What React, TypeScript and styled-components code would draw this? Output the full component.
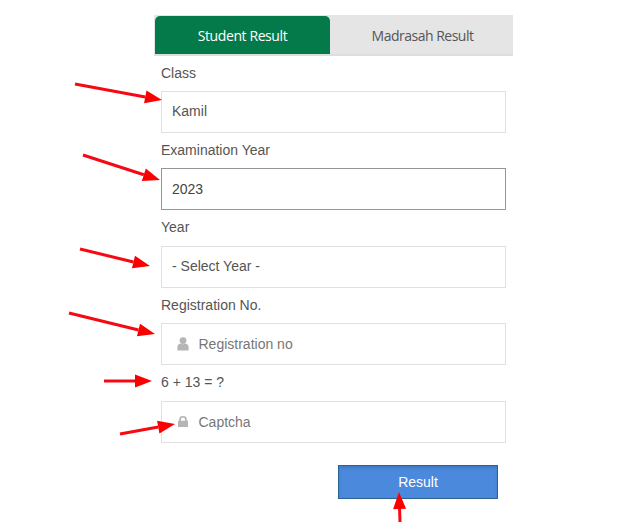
import React from "react";
import styled, { createGlobalStyle } from "styled-components";

const GlobalStyle = createGlobalStyle`
  html, body {
    margin: 0;
    padding: 0;
    background: #fff;
  }
`;

const arrows = [
  { x1: 75, y1: 84, x2: 162, y2: 100 },
  { x1: 83, y1: 155, x2: 160, y2: 180 },
  { x1: 80, y1: 249, x2: 150, y2: 266 },
  { x1: 69, y1: 313, x2: 155, y2: 334 },
  { x1: 104, y1: 381, x2: 152, y2: 381 },
  { x1: 120, y1: 434, x2: 175, y2: 424 },
  { x1: 400, y1: 522, x2: 399, y2: 492 },
];

const Arrow = ({ x1, y1, x2, y2 }: { x1: number; y1: number; x2: number; y2: number }) => {
  const a = Math.atan2(y2 - y1, x2 - x1);
  const len = 17;
  const half = 6.5;
  const bx = x2 - len * Math.cos(a);
  const by = y2 - len * Math.sin(a);
  const px = -Math.sin(a) * half;
  const py = Math.cos(a) * half;
  return (
    <g>
      <line x1={x1} y1={y1} x2={bx} y2={by} stroke="#f50a14" strokeWidth="3" />
      <polygon points={`${x2},${y2} ${bx + px},${by + py} ${bx - px},${by - py}`} fill="#fb0000" />
    </g>
  );
};

const App = () => {
  return (
    <Page>
      <GlobalStyle />
      <Panel>
        <Tabs>
          <Tab $active>Student Result</Tab>
          <Tab>Madrasah Result</Tab>
        </Tabs>
        <Form>
          <Label>Class</Label>
          <Field>Kamil</Field>
          <Label>Examination Year</Label>
          <Field $focused>2023</Field>
          <Label>Year</Label>
          <Field>- Select Year -</Field>
          <Label>Registration No.</Label>
          <Field $placeholder>
            <IconSlot>
              <svg width="12" height="14" viewBox="0 0 12 14" fill="#b5b5b5">
                <circle cx="6" cy="3.6" r="3.4" />
                <path d="M0.4 13.4V10c0-2 1.3-3.3 3-3.6 1.6 1 3.6 1 5.2 0 1.7.3 3 1.6 3 3.6v3.4z" />
              </svg>
            </IconSlot>
            Registration no
          </Field>
          <Label>6 + 13 = ?</Label>
          <Field $placeholder>
            <IconSlot $lock>
              <svg width="10" height="11" viewBox="0 0 10 11" fill="#b5b5b5">
                <path d="M0 11V4.8h1.2V3.4a3.8 3.4 0 0 1 7.6 0v1.4H10V11zM3 4.8h4V3.4a2 1.8 0 0 0-4 0z" />
              </svg>
            </IconSlot>
            Captcha
          </Field>
          <SubmitRow>
            <SubmitButton>Result</SubmitButton>
          </SubmitRow>
        </Form>
      </Panel>
      <Overlay width="625" height="529" viewBox="0 0 625 529">
        {arrows.map((arrow, i) => (
          <Arrow key={i} {...arrow} />
        ))}
      </Overlay>
    </Page>
  );
};

export default App;

const Page = styled.div`
  position: relative;
  width: 625px;
  height: 529px;
  overflow: hidden;
  padding: 15px 0 0 154px;
  box-sizing: border-box;
  font-family: "Liberation Sans", Arial, sans-serif;
`;

const Panel = styled.div`
  width: 359px;
`;

const Tabs = styled.div`
  display: flex;
  height: 41px;
  box-sizing: border-box;
  padding: 1px 0 0 1px;
  background: #e5e5e5;
  border-bottom: 2px solid #dedede;
`;

const Tab = styled.div<{ $active?: boolean }>`
  width: ${(p) => (p.$active ? "175px" : "183px")};
  box-sizing: border-box;
  padding-left: ${(p) => (p.$active ? "0" : "2px")};
  display: flex;
  align-items: center;
  justify-content: center;
  font-family: "Open Sans", sans-serif;
  font-size: 14px;
  letter-spacing: ${(p) => (p.$active ? "-0.4px" : "-0.5px")};
  color: ${(p) => (p.$active ? "#fff" : "#555")};
  background: ${(p) => (p.$active ? "#04794a" : "transparent")};
  border-radius: ${(p) => (p.$active ? "5px 5px 0 0" : "0")};
`;

const Form = styled.div`
  display: flex;
  flex-direction: column;
  width: 345px;
  margin-left: 7px;
  padding-top: 7.4px;
`;

const Label = styled.div`
  height: 27.5px;
  box-sizing: border-box;
  font-size: 14px;
  line-height: 18px;
  color: #555;
  &:first-child {
    padding-top: 1px;
  }
  & + div {
    margin-bottom: 8px;
  }
`;

const Field = styled.div<{ $focused?: boolean; $placeholder?: boolean }>`
  height: 42px;
  box-sizing: border-box;
  display: flex;
  align-items: center;
  padding: 0 0 ${(p) => (p.$placeholder ? "0" : "1px")} 10px;
  font-size: 14px;
  background: #fff;
  color: ${(p) => (p.$placeholder ? "#777" : p.$focused ? "#444" : "#555")};
  border: 1px solid ${(p) => (p.$focused ? "#969696" : "#e0e0e0")};
`;

const IconSlot = styled.span<{ $lock?: boolean }>`
  display: inline-flex;
  width: 26.5px;
  justify-content: flex-start;
  padding-left: ${(p) => (p.$lock ? "6px" : "5px")};
  box-sizing: border-box;
`;

const SubmitRow = styled.div`
  padding: 14px 0 0 177px;
`;

const SubmitButton = styled.button`
  display: block;
  width: 160px;
  height: 34px;
  padding: 0;
  font-family: "Liberation Sans", Arial, sans-serif;
  font-size: 14px;
  color: #fff;
  background: #4a89dc;
  border: 1px solid #2a6496;
  box-shadow: inset 0 2px 3px rgba(0, 0, 0, 0.12);
`;

const Overlay = styled.svg`
  position: absolute;
  top: 0;
  left: 0;
  pointer-events: none;
`;
